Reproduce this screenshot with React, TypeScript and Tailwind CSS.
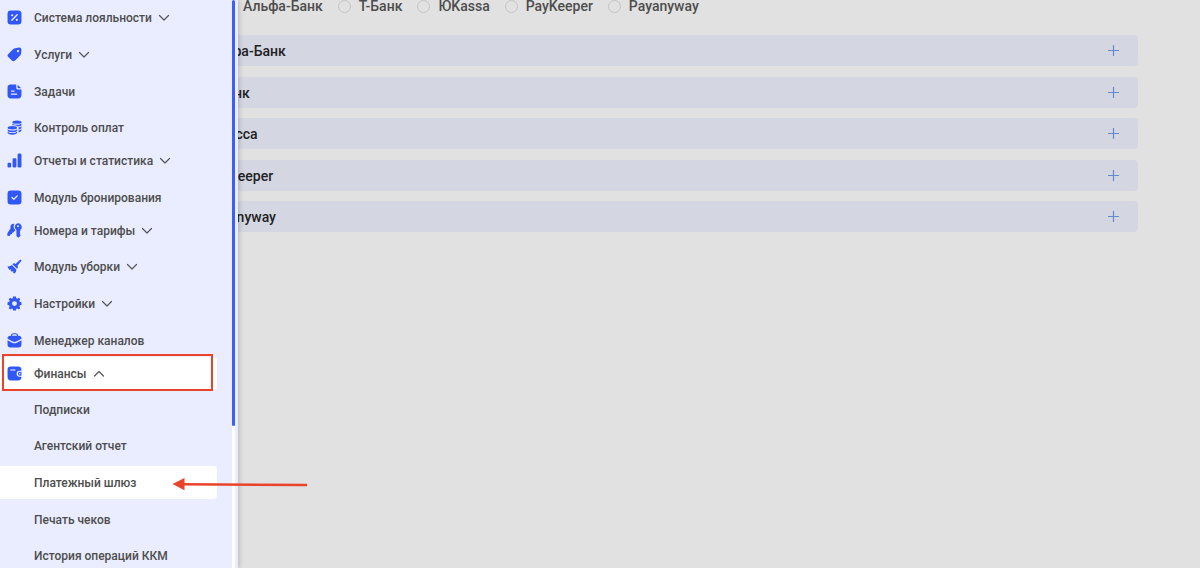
import React from 'react';

type IconName =
  | 'percent'
  | 'tag'
  | 'note'
  | 'coins'
  | 'bars'
  | 'check'
  | 'keys'
  | 'broom'
  | 'gear'
  | 'case'
  | 'wallet';

interface MenuItem {
  label: string;
  gap: string;
  icon?: IconName;
  chevron?: 'up' | 'down';
  active?: boolean;
  framed?: boolean;
  pointed?: boolean;
}

const menu: MenuItem[] = [
  { label: 'Система лояльности', icon: 'percent', chevron: 'down', gap: 'mb-1' },
  { label: 'Услуги', icon: 'tag', chevron: 'down', gap: 'mb-1' },
  { label: 'Задачи', icon: 'note', gap: 'mb-[3px]' },
  { label: 'Контроль оплат', icon: 'coins', gap: 'mb-0' },
  { label: 'Отчеты и статистика', icon: 'bars', chevron: 'down', gap: 'mb-1' },
  { label: 'Модуль бронирования', icon: 'check', gap: 'mb-0' },
  { label: 'Номера и тарифы', icon: 'keys', chevron: 'down', gap: 'mb-[3px]' },
  { label: 'Модуль уборки', icon: 'broom', chevron: 'down', gap: 'mb-1' },
  { label: 'Настройки', icon: 'gear', chevron: 'down', gap: 'mb-1' },
  { label: 'Менеджер каналов', icon: 'case', gap: 'mb-0' },
  { label: 'Финансы', icon: 'wallet', chevron: 'up', active: true, framed: true, gap: 'mb-[3px]' },
  { label: 'Подписки', gap: 'mb-[3px]' },
  { label: 'Агентский отчет', gap: 'mb-1' },
  { label: 'Платежный шлюз', active: true, pointed: true, gap: 'mb-1' },
  { label: 'Печать чеков', gap: 'mb-[3px]' },
  { label: 'История операций ККМ', gap: 'mb-0' },
];

const gateways = ['Альфа-Банк', 'Т-Банк', 'ЮKassa', 'PayKeeper', 'Payanyway'];

const sections = ['Альфа-Банк', 'Т-Банк', 'ЮКасса', 'PayKeeper', 'Payanyway'];

const line = {
  fill: 'none',
  stroke: '#eaedff',
  strokeLinecap: 'round' as const,
  strokeLinejoin: 'round' as const,
};

const icons: Record<IconName, React.ReactNode> = {
  percent: (
    <>
      <rect x="0.5" y="0.5" width="13" height="13" rx="3" />
      <path d="M4.5 9.6 9.5 4.4" {...line} strokeWidth="1.3" />
      <circle cx="4.9" cy="4.9" r="1" fill="#eaedff" />
      <circle cx="9.2" cy="9.2" r="1" fill="#eaedff" />
    </>
  ),
  tag: (
    <>
      <path d="M7.6 1.2 11.2.5c1.4-.2 2.4.8 2.3 2.2l-.4 3.6c-.1.7-.3 1.1-.8 1.6L7.6 12.6c-.9.9-2.2.9-3.1 0L1.2 9.4c-.9-.9-.9-2 0-2.9l4.7-4.6c.5-.5 1-.6 1.7-.7Z" />
      <circle cx="10.3" cy="3.8" r="1.1" fill="#eaedff" />
    </>
  ),
  note: (
    <>
      <path d="M3.4.5h5.2v2.8c0 1.2.7 1.9 1.9 1.9h3v5.4c0 1.8-1.1 2.9-2.9 2.9H3.4c-1.8 0-2.9-1.1-2.9-2.9V3.4C.5 1.6 1.6.5 3.4.5Z" />
      <path d="M9.8.7 13.3 4h-2.6c-.6 0-.9-.3-.9-.9Z" />
      <path d="M4.2 6.6h2.4M4.2 9.5H9" {...line} strokeWidth="1.2" />
    </>
  ),
  coins: (
    <>
      <ellipse cx="9.3" cy="2" rx="4.3" ry="1.6" />
      <path d="M5 3.2c.8 1 2.4 1.3 4.3 1.3s3.6-.4 4.2-1.3v1.2c0 .9-1.500 1.500-3.300 1.600C9.100 5.300 7.400 4.900 5 4.900Z" />
      <path d="M10.800 7c1.300-.2 2.200-.6 2.700-1.100v1.300c0 .8-1 1.400-2.700 1.600Z" />
      <path d="M10.800 9.700c1.300-.2 2.200-.6 2.700-1.100v1.300c0 .8-1 1.300-2.700 1.500Z" />
      <ellipse cx="5" cy="7.3" rx="4.4" ry="1.6" />
      <path d="M.6 8.6c.8.8 2.4 1.2 4.4 1.2s3.7-.4 4.5-1.2v1.2c0 1-2 1.6-4.5 1.6S.6 10.8.6 9.8Z" />
      <path d="M.6 11c.8.8 2.4 1.2 4.4 1.2s3.7-.4 4.5-1.2v1c0 1-2 1.7-4.5 1.7S.6 13 .6 12Z" />
    </>
  ),
  bars: (
    <>
      <rect x="0.5" y="9" width="3.4" height="4.5" rx="1.2" />
      <rect x="5.2" y="5" width="3.6" height="8.5" rx="1.2" />
      <rect x="9.9" y="0.5" width="3.6" height="13" rx="1.2" />
    </>
  ),
  check: (
    <>
      <rect x="0.5" y="0.5" width="13" height="13" rx="3" />
      <path d="m4.6 7 1.8 1.7 3.2-3.2" {...line} strokeWidth="1.2" />
    </>
  ),
  keys: (
    <>
      <path
        fillRule="evenodd"
        d="M10.3.3a3.4 3.4 0 0 1 2.2 6v1.2l-.7.7.7.9-.7.9.7.9v1.2l-2 1.6-1.700-1.500V6.500A3.400 3.400 0 0 1 10.300.3Zm0 1.900a.9.9 0 1 0 0 1.800.9.9 0 0 0 0-1.800Z"
      />
      <path d="M6.900.9c-1.300-.5-2.900.2-3.500 1.600-.4.9-.3 1.700 0 2.500L.3 9.500l.2 2.700 2.300-.2.6-1.500 1.300-.2.1-1.200 1.300-.2.5-1.200 1-.1V6.400A4.600 4.600 0 0 1 6.900.9Z" />
    </>
  ),
  broom: (
    <>
      <path d="M12.2.8c.8-.6 1.7.2 1.1 1L9.700 6.300l.4.8c.2.5.1 1-.2 1.300l-.6.6-4.200-4.200.6-.5c.4-.4.9-.4 1.400-.2l.8.5Z" />
      <path d="M4.500 5.600 8.600 9.700c.3 1.600-.4 2.800-1.700 3.800l-1.400-.9.6-1.500-1.500.9-1.300-1.100.8-1.500-1.600.8C1.500 9.400.9 8.300.6 6.800c1.500.3 2.700-.1 3.900-1.200Z" />
    </>
  ),
  gear: (
    <path
      fillRule="evenodd"
      d="M5.700.5h2.600l.4 1.700.9.4 1.500-.9 1.300 1.300-.9 1.500.4.9 1.600.4v2.600l-1.600.4-.4.9.9 1.500-1.300 1.300-1.500-.9-.9.4-.4 1.500H5.700l-.4-1.500-.9-.4-1.500.9-1.300-1.300.9-1.500-.4-.9L.5 8.400V5.800l1.600-.4.4-.9L1.600 3l1.300-1.300 1.500.9.900-.4ZM7 4.800a2.300 2.300 0 1 0 0 4.600 2.300 2.300 0 0 0 0-4.600Z"
    />
  ),
  case: (
    <>
      <path d="M4.300 3V2.200C4.300 1.200 5 .7 6 .7h2c1 0 1.700.5 1.700 1.500V3" fill="none" stroke="#3157f6" strokeWidth="1.1" />
      <path d="M3 2.500h8c1.500 0 2.500.9 2.500 2.400v.4L8.600 8c-1 .5-2.200.5-3.200 0L.5 5.300v-.4c0-1.500 1-2.400 2.500-2.400Z" />
      <path d="m.5 6.700 4.300 2.400c1.400.7 3 .7 4.400 0l4.300-2.400v4.100c0 1.700-1 2.700-2.700 2.700H3.200c-1.700 0-2.700-1-2.700-2.700Z" />
    </>
  ),
  wallet: (
    <>
      <path d="M3.500.5h7c1.800 0 3 1.100 3 3v.9h-1.700a2.800 2.800 0 0 0 0 5.600h1.700v.5c0 1.900-1.200 3-3 3h-7c-1.800 0-3-1.100-3-3v-7c0-1.900 1.200-3 3-3Z" />
      <path d="M3.500 3.700h4" fill="none" stroke="#fff" strokeWidth="1.1" strokeLinecap="round" />
      <path fillRule="evenodd" d="M11.900 5.400h1.600v3.600h-1.600a1.800 1.800 0 0 1 0-3.600Zm0 1.100a.7.7 0 1 0 0 1.400.7.7 0 0 0 0-1.400Z" />
    </>
  ),
};

function Chevron({ up }: { up: boolean }) {
  return (
    <svg viewBox="0 0 12 8" className="ml-1.5 h-2 w-3" fill="none" stroke="#555" strokeWidth="1.2" strokeLinecap="round" strokeLinejoin="round" aria-hidden="true">
      <path d={up ? 'm1.5 6 4.5-4.5L10.5 6' : 'M1.5 1.5 6 6l4.5-4.5'} />
    </svg>
  );
}

function MenuRow({ item }: { item: MenuItem }) {
  const rowClass = `flex h-[33px] w-full items-center rounded-r pl-[7px] text-left ${item.active ? 'bg-white' : ''}`;

  const content = (
    <>
      <span className="mr-3 w-[15px] shrink-0">
        {item.icon && (
          <svg viewBox="0 0 14 14" className="size-[15px]" fill="#3157f6" aria-hidden="true">
            {icons[item.icon]}
          </svg>
        )}
      </span>
      <span className="whitespace-nowrap">{item.label}</span>
      {item.chevron && <Chevron up={item.chevron === 'up'} />}
    </>
  );

  return (
    <li className={`relative ${item.gap}`}>
      {item.chevron ? (
        <button type="button" aria-expanded={item.chevron === 'up'} className={rowClass}>
          {content}
        </button>
      ) : (
        <a href="#" className={rowClass}>
          {content}
        </a>
      )}

      {item.framed && (
        <span className="pointer-events-none absolute -top-[3px] -bottom-px left-0.5 right-1 border-2 border-[#e9432b]" />
      )}

      {item.pointed && (
        <svg viewBox="0 0 136 14" className="pointer-events-none absolute left-[172px] top-3 h-3.5 w-[136px]" aria-hidden="true">
          <path d="M10 6.3 135 7" stroke="#e9432b" strokeWidth="2.4" fill="none" />
          <path d="M0.5 6 12.5 0v12.3Z" fill="#e9432b" />
        </svg>
      )}
    </li>
  );
}

export default function App() {
  return (
    <div className="relative h-screen overflow-hidden bg-[#e1e1e1] font-['Roboto',sans-serif] font-medium">
      {/* Page content under the drawer */}
      <main className="pl-[190px] pr-[62px]">
        <div className="flex h-[35px] gap-[15px] pl-8">
          {gateways.map((name) => (
            <label key={name} className="flex h-3 items-center gap-2 whitespace-nowrap text-sm/3 text-[#4d4d4d]">
              <input
                type="radio"
                name="gateway"
                className="size-[13px] shrink-0 appearance-none rounded-full border border-[#c4c4c4]"
              />
              {name}
            </label>
          ))}
        </div>

        {sections.map((name) => (
          <button
            key={name}
            type="button"
            aria-expanded="false"
            className="flex h-[31px] w-full items-center justify-between rounded bg-[#d4d6e1] pl-4 pr-[18px] text-sm text-[#222] odd:mb-2.5 even:mb-[11px]"
          >
            <span>{name}</span>
            <svg viewBox="0 0 13 13" className="size-[13px]" stroke="#638bd2" strokeWidth="1.2" aria-hidden="true">
              <path d="M6.5 1v11M1 6.5h11" />
            </svg>
          </button>
        ))}
      </main>

      {/* Navigation drawer */}
      <aside className="absolute inset-y-0 left-0 flex w-[238px] bg-[#eaedff] pr-[3px] shadow-[1px_0_5px_rgba(0,0,0,0.2)]">
        <nav className="mr-[15px] flex-1 pt-px text-xs text-[#4d4d4d]">
          <ul>
            {menu.map((item) => (
              <MenuRow key={item.label} item={item} />
            ))}
          </ul>
        </nav>
        <div className="w-[3px] bg-white">
          <div className="h-3/4 rounded-full bg-[#3d5ff5]" />
        </div>
      </aside>
    </div>
  );
}
